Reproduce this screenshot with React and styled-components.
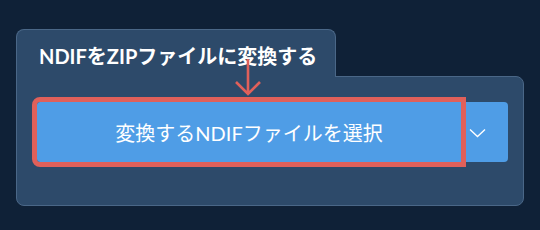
import React from "react";
import styled, { createGlobalStyle } from "styled-components";

const GlobalStyle = createGlobalStyle`
  html, body {
    margin: 0;
    padding: 0;
    background: #0f2137;
  }
  body {
    font-family: "Lato", "Noto Sans CJK JP", sans-serif;
    color: #ffffff;
  }
`;

const App = () => {
  return (
    <>
      <GlobalStyle />
      <Page>
        <Card>
          <Tab>
            <Title>NDIFをZIPファイルに変換する</Title>
          </Tab>
          <Panel>
            <ButtonGroup>
              <MainButton>変換するNDIFファイルを選択</MainButton>
              <DropButton aria-label="more">
                <svg width="17" height="10" viewBox="0 0 17 10" fill="none">
                  <path d="M1 1.5 L8.5 8.5 L16 1.5" stroke="#ffffff" strokeWidth="1.4" />
                </svg>
              </DropButton>
            </ButtonGroup>
          </Panel>
          <Arrow width="30" height="38" viewBox="0 0 30 38" fill="none">
            <path d="M15 0 V35 M3 23 L15 35 L27 23" stroke="#e0605a" strokeWidth="2.6" />
          </Arrow>
        </Card>
      </Page>
    </>
  );
};

const Page = styled.div`
  width: 540px;
  height: 230px;
  box-sizing: border-box;
  padding: 29px 16px 0 16px;
`;

const Card = styled.div`
  position: relative;
  width: 508px;
  display: flex;
  flex-direction: column;
  align-items: flex-start;
`;

const Tab = styled.div`
  position: relative;
  z-index: 2;
  box-sizing: border-box;
  width: 320px;
  height: 48px;
  margin-bottom: -1px;
  background: #2d4a6a;
  border: 1px solid #4a6787;
  border-bottom: none;
  border-radius: 8px 8px 0 0;
  display: flex;
  align-items: center;
  padding: 4px 0 0 22px;
`;

const Title = styled.h2`
  margin: 0;
  font-size: 20px;
  font-weight: 700;
  letter-spacing: 0;
  white-space: nowrap;
`;

const Panel = styled.div`
  box-sizing: border-box;
  width: 508px;
  height: 130px;
  background: #2d4a6a;
  border: 1px solid #4a6787;
  border-radius: 0 8px 8px 8px;
  padding: 25px 0 0 20px;
`;

const ButtonGroup = styled.div`
  display: flex;
  height: 60px;
  width: 471px;
`;

const MainButton = styled.button`
  position: relative;
  z-index: 1;
  width: 424px;
  height: 60px;
  border: none;
  background: #4f9de6;
  color: #ffffff;
  font-family: "Lato", "Noto Sans CJK JP", sans-serif;
  font-size: 20px;
  font-weight: 400;
  border-radius: 3px 0 0 3px;
  outline: 5px solid #e0605a;
  outline-offset: 0;
  padding: 0;
  cursor: pointer;
`;

const DropButton = styled.button`
  width: 47px;
  height: 60px;
  border: none;
  background: #4f9de6;
  border-radius: 0 4px 4px 0;
  display: flex;
  align-items: center;
  justify-content: flex-start;
  padding: 2px 0 0 8px;
  cursor: pointer;
`;

const Arrow = styled.svg`
  position: absolute;
  left: 217px;
  top: 30px;
  z-index: 3;
`;

export default App;
